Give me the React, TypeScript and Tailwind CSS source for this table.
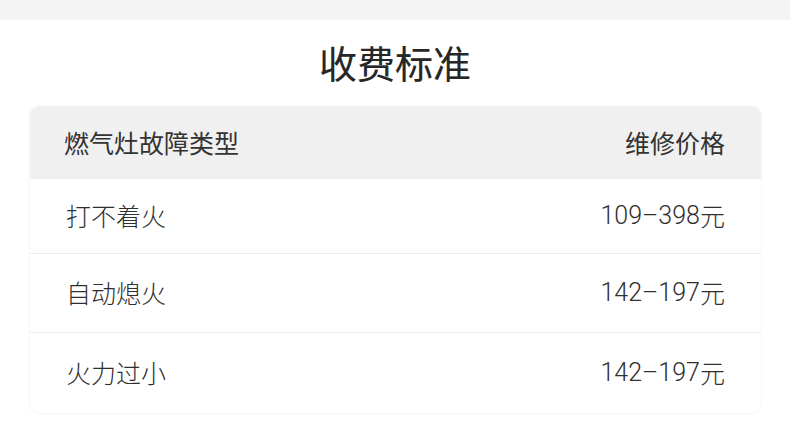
import React from "react";

const rows = [
  { name: "打不着火", price: "109–398", h: "h-[75px]" },
  { name: "自动熄火", price: "142–197", h: "h-[79px]" },
  { name: "火力过小", price: "142–197", h: "h-[80px]" },
];

export default function App() {
  return (
    <div
      className="w-[790px] h-[436px] bg-white overflow-hidden"
      style={{ fontFamily: '"Noto Sans CJK SC", "Noto Sans", sans-serif' }}
    >
      <div className="h-[20px] bg-[#f4f4f4]" />
      <div className="h-[86px] flex items-center justify-center">
        <h1 className="text-[38px] leading-none font-normal text-[#262626] pb-[2px] [-webkit-text-stroke:0.15px_#262626]">
          收费标准
        </h1>
      </div>
      <div className="mx-[30px] w-[731px] rounded-[10px] bg-white shadow-[0_0_3px_rgba(0,0,0,0.08)] overflow-hidden">
        <div className="h-[73px] bg-[#f0f0f0] flex items-center justify-between pl-[34px] pr-[36px] text-[25px] text-[#333]">
          <span>燃气灶故障类型</span>
          <span>维修价格</span>
        </div>
        {rows.map((r, i) => (
          <div
            key={i}
            className={`${r.h} flex items-center justify-between pl-[36px] pr-[36px] text-[25px] text-[#2f2f2f] ${
              i < rows.length - 1 ? "border-b border-[#ececec]" : ""
            }`}
          >
            <span className="font-light">{r.name}</span>
            <span className="flex items-center">
              <span className="font-['Roboto',sans-serif] font-light text-[25px]">{r.price}</span>
              <span className="font-light">元</span>
            </span>
          </div>
        ))}
      </div>
    </div>
  );
}
